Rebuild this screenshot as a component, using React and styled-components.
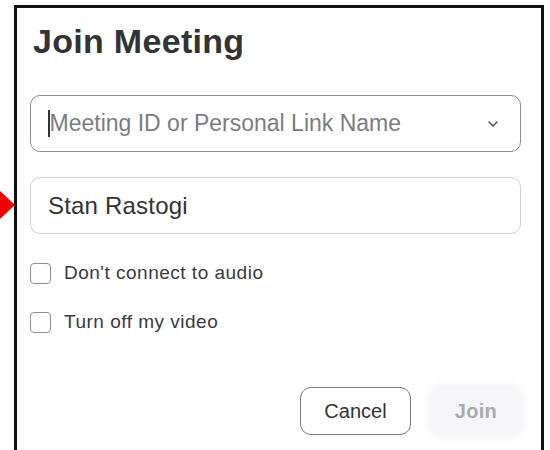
import React from 'react';
import styled, { createGlobalStyle } from 'styled-components';

const GlobalStyle = createGlobalStyle`
  html, body {
    margin: 0;
    background: #ffffff;
  }
  body {
    font-family: "Liberation Sans", Arial, sans-serif;
    -webkit-font-smoothing: antialiased;
  }
`;

const Page = styled.div`
  position: relative;
  width: 550px;
  height: 450px;
  overflow: hidden;
  padding: 5px 0 0 14px;
  box-sizing: border-box;
`;

const Frame = styled.div`
  width: 530px;
  height: 460px;
  box-sizing: border-box;
  border: 3px solid #111;
  border-bottom: none;
  background: #fff;
  padding: 12px 20px 0 13px;
  display: flex;
  flex-direction: column;
`;

const Pointer = styled.svg`
  position: absolute;
  left: 0;
  top: 191px;
`;

const Title = styled.h1`
  margin: 0 0 0 3px;
  font-size: 34px;
  line-height: 42px;
  font-weight: 700;
  color: #333336;
  letter-spacing: 0.3px;
`;

const Field = styled.div`
  height: 57px;
  box-sizing: border-box;
  border: 1px solid ${p => (p.$strong ? '#8a8d93' : '#cfd0d3')};
  border-radius: 10px;
  display: flex;
  align-items: center;
  padding: 0 22px 0 17px;
  margin-top: ${p => p.$top}px;
  font-size: ${p => (p.$muted ? 23 : 24)}px;
  letter-spacing: ${p => (p.$muted ? 0 : 0.2)}px;
  color: ${p => (p.$muted ? '#7b7c80' : '#333')};
`;

const Caret = styled.span`
  width: 1.5px;
  height: 27px;
  background: #333;
`;

const FieldText = styled.span`
  flex: 1;
`;

const Chevron = styled.svg`
  display: block;
`;

const Options = styled.div`
  margin-top: 28px;
  display: flex;
  flex-direction: column;
  gap: 27px;
`;

const Option = styled.label`
  display: flex;
  align-items: center;
  gap: 13px;
  font-size: 19px;
  letter-spacing: 0.5px;
  color: #3a3a3d;
`;

const Box = styled.span`
  width: 21px;
  height: 21px;
  box-sizing: border-box;
  border: 1px solid #8e8f93;
  border-radius: 4px;
`;

const Actions = styled.div`
  margin-top: 54px;
  display: flex;
  justify-content: flex-end;
  align-items: center;
  gap: 20px;
`;

const Button = styled.button`
  font-family: inherit;
  height: 48px;
  box-sizing: border-box;
  border-radius: 11px;
  cursor: pointer;
  ${p =>
    p.$primary
      ? `
    width: 90px;
    border: none;
    background: #f6f6f9;
    box-shadow: 0 0 8px 4px #f6f6f9;
    color: #a9a9ae;
    font-weight: 700;
    font-size: 20px;
    letter-spacing: 0.3px;
  `
      : `
    width: 111px;
    border: 1px solid #77787c;
    background: #fff;
    color: #333;
    font-size: 20px;
  `}
`;

export default function App() {
  return (
    <>
      <GlobalStyle />
      <Page>
        <Pointer width="15" height="28" viewBox="0 0 15 28">
          <polygon points="0,0 15,14 0,28" fill="#f00000" />
        </Pointer>
        <Frame>
          <Title>Join Meeting</Title>
          <Field $strong $muted $top={33}>
            <Caret />
            <FieldText>Meeting ID or Personal Link Name</FieldText>
            <Chevron width="10" height="6" viewBox="0 0 10 6">
              <path d="M1 1l4 4 4-4" fill="none" stroke="#555" strokeWidth="1.6" strokeLinecap="round" strokeLinejoin="round" />
            </Chevron>
          </Field>
          <Field $top={25}>
            <FieldText>Stan Rastogi</FieldText>
          </Field>
          <Options>
            <Option>
              <Box />
              Don't connect to audio
            </Option>
            <Option>
              <Box />
              Turn off my video
            </Option>
          </Options>
          <Actions>
            <Button>Cancel</Button>
            <Button $primary>Join</Button>
          </Actions>
        </Frame>
      </Page>
    </>
  );
}
